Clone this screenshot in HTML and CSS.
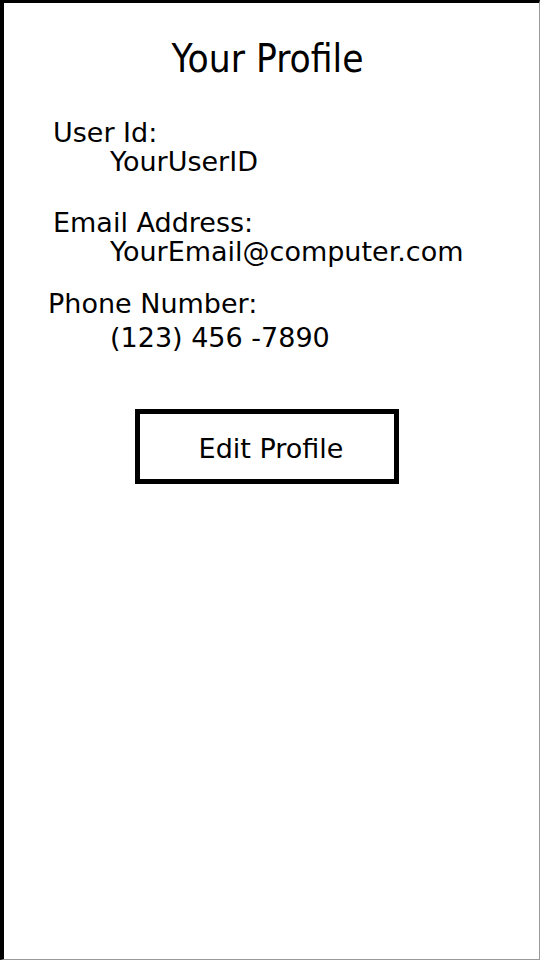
FILE: index.html
```html
<!DOCTYPE html>
<html>
<head>
<meta charset="utf-8">
<link rel="stylesheet" href="styles.css">
</head>
<body>
<div class="frame">
  <h1 class="title">Your Profile</h1>
  <div class="field field-user">
    <div class="label">User Id:</div>
    <div class="value">YourUserID</div>
  </div>
  <div class="field field-email">
    <div class="label">Email Address:</div>
    <div class="value">YourEmail@computer.com</div>
  </div>
  <div class="field field-phone">
    <div class="label label-phone">Phone Number:</div>
    <div class="value value-phone">(123) 456 -7890</div>
  </div>
  <div class="actions">
    <button class="edit-btn">Edit Profile</button>
  </div>
</div>
</body>
</html>
```
FILE: styles.css
```css
html, body {
  margin: 0;
  padding: 0;
  background: #fff;
}
.frame {
  box-sizing: border-box;
  width: 540px;
  height: 960px;
  border-left: 4px solid #000;
  border-top: 3px solid #000;
  border-right: 1px solid #999;
  border-bottom: 1px solid #999;
  font-family: "DejaVu Sans", Verdana, sans-serif;
  color: #000;
  display: flex;
  flex-direction: column;
}
.title {
  margin: 33px 0 0 0;
  font-family: "DejaVu Sans Condensed", "DejaVu Sans", sans-serif;
  font-weight: normal;
  font-size: 38.5px;
  line-height: 46px;
  text-align: center;
  padding-right: 8px;
}
.field {
  font-size: 27px;
  line-height: 29px;
}
.field-user { margin-top: 36px; padding-left: 49px; }
.field-email { margin-top: 32px; padding-left: 49px; }
.field-phone { margin-top: 23px; padding-left: 44px; }
.value { padding-left: 57px; }
.value-phone { padding-left: 62px; margin-top: 5px; }
.actions {
  margin-top: 57px;
  display: flex;
  padding-left: 131px;
}
.edit-btn {
  box-sizing: border-box;
  width: 264px;
  height: 75px;
  border: 5px solid #000;
  background: #fff;
  font-family: "DejaVu Sans", Verdana, sans-serif;
  font-size: 27px;
  color: #000;
  padding: 3px 0 0 8px;
}
```
